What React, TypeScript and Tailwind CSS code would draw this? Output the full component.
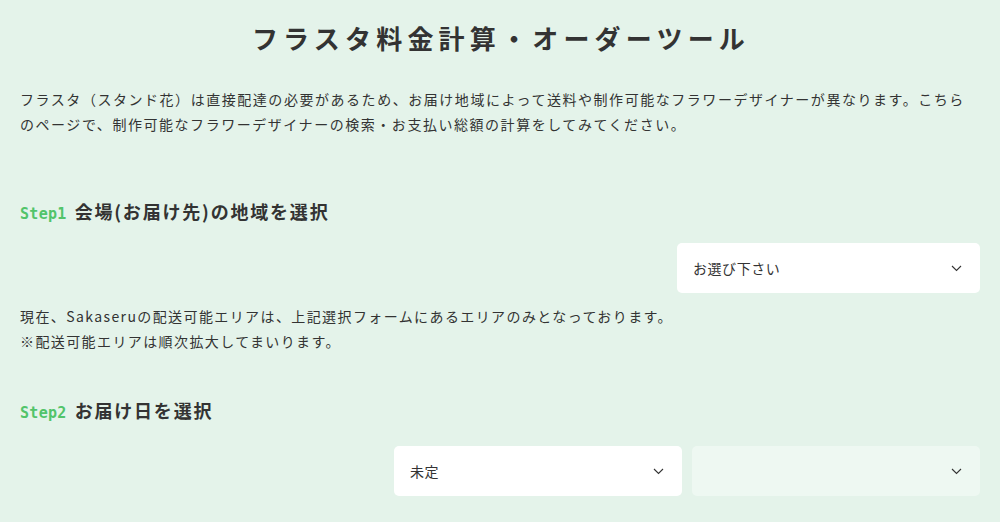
const Chevron = () => (
  <svg width="11" height="7" viewBox="0 0 11 7" fill="none" className="shrink-0">
    <polyline points="1,1 5.5,5.5 10,1" stroke="#333" strokeWidth="1.1" />
  </svg>
);

const Select = ({ label, className }: { label?: string; className: string }) => (
  <div
    className={`flex h-[50px] items-center justify-between rounded-[5px] pl-4 pr-[18px] text-[14px] tracking-[0.04em] text-[#333] ${className}`}
  >
    <span>{label}</span>
    <Chevron />
  </div>
);

const StepTitle = ({ step, title }: { step: string; title: string }) => (
  <h2 className="flex h-[30px] items-baseline gap-2 leading-[30px]">
    <span className="font-['DejaVu_Sans_Mono',monospace] text-[15px] font-bold tracking-[0.02em] text-[#52c46a]">
      {step}
    </span>
    <span className="text-[18px] font-bold tracking-[0.1em] text-[#333]">{title}</span>
  </h2>
);

export default function App() {
  return (
    <div className="min-h-screen bg-[#e4f3ea] px-5 font-['Noto_Sans_CJK_JP','Noto_Sans',sans-serif] text-[#333]">
      <h1 className="pl-[2px] pt-[19px] text-center text-[26px] font-bold leading-[38px] tracking-[0.2em]">
        フラスタ料金計算・オーダーツール
      </h1>

      <p className="mt-[30px] text-[14px] leading-[25px] tracking-[0.11em]">
        フラスタ（スタンド花）は直接配達の必要があるため、お届け地域によって送料や制作可能なフラワーデザイナーが異なります。こちらのページで、制作可能なフラワーデザイナーの検索・お支払い総額の計算をしてみてください。
      </p>

      <section className="mt-[59px]">
        <StepTitle step="Step1" title="会場(お届け先)の地域を選択" />
        <div className="mt-[17px] flex justify-end">
          <Select label="お選び下さい" className="w-[303px] bg-white" />
        </div>
        <p className="mt-[11px] text-[14px] leading-[25px] tracking-[0.1em]">
          現在、Sakaseruの配送可能エリアは、上記選択フォームにあるエリアのみとなっております。
          <br />
          ※配送可能エリアは順次拡大してまいります。
        </p>
      </section>

      <section className="mt-[41px]">
        <StepTitle step="Step2" title="お届け日を選択" />
        <div className="mt-[21px] flex justify-end gap-[10px]">
          <Select label="未定" className="w-[288px] bg-white" />
          <Select className="w-[288px] bg-[#eef8f2]" />
        </div>
      </section>
    </div>
  );
}
